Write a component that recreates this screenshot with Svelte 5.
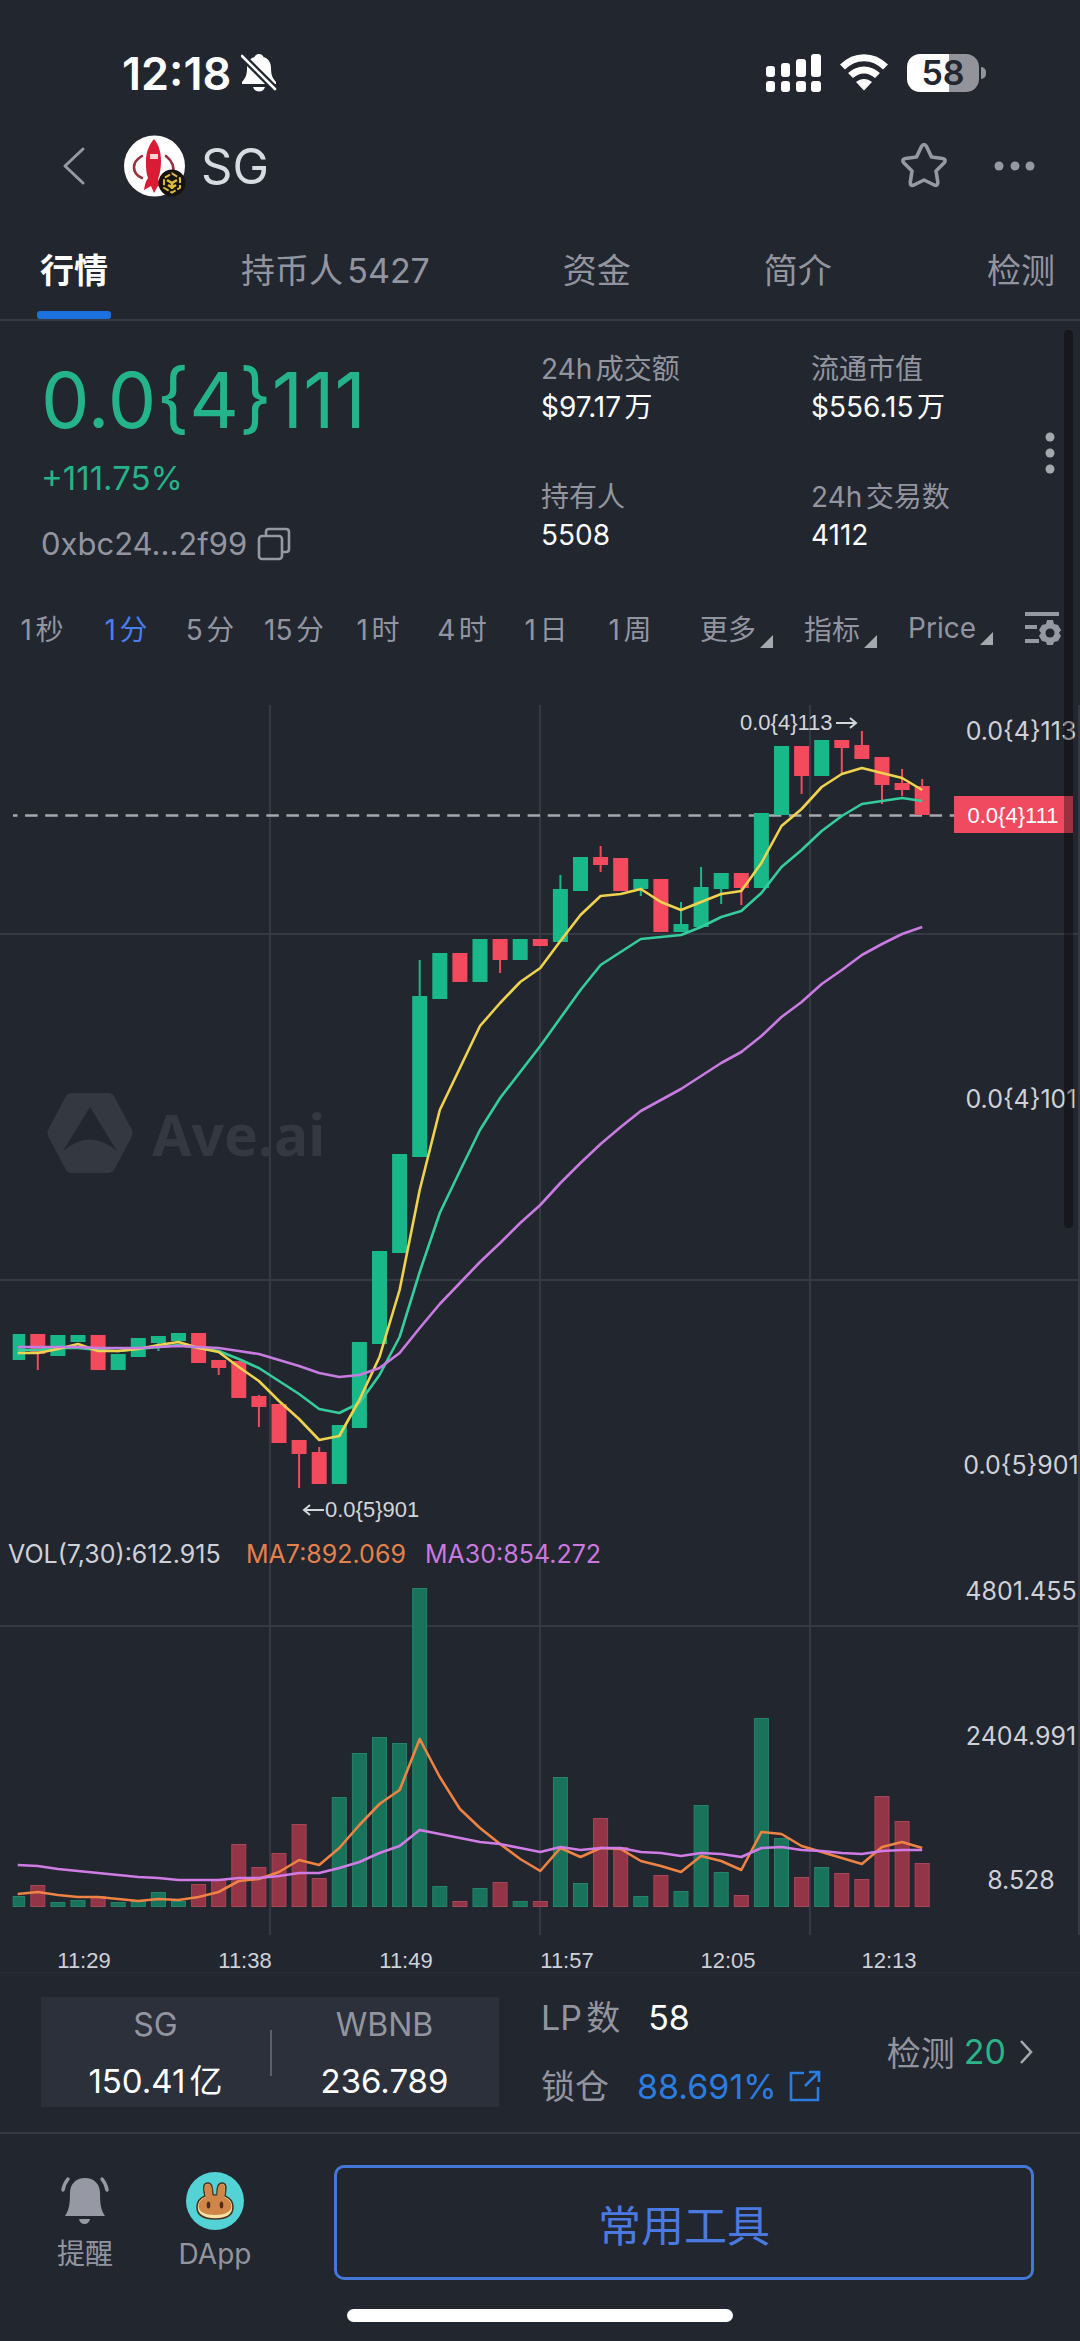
<script lang="ts">
  type Candle = { up: boolean; top: number; bottom: number; high?: number; low?: number };

  const tabs = ['行情', '持币人5427', '资金', '简介', '检测'];
  const intervals = ['1秒', '1分', '5分', '15分', '1时', '4时', '1日', '1周'];
  const menus = ['更多', '指标', 'Price'];

  const stats = [
    { label: '24h成交额', value: '$97.17万' },
    { label: '流通市值', value: '$556.15万' },
    { label: '持有人', value: '5508' },
    { label: '24h交易数', value: '4112' },
  ];

  let activeTab = $state('行情');
  let activeInterval = $state('1分');

  const up = (top: number, bottom: number, high?: number, low?: number): Candle => ({ up: true, top, bottom, high, low });
  const down = (top: number, bottom: number, high?: number, low?: number): Candle => ({ up: false, top, bottom, high, low });

  // One entry per minute, in chart units
  const candles: Candle[] = [
    up(674, 700), down(674, 694, 674, 710), up(675, 696), up(675, 682), down(675, 710),
    up(694, 710), up(678, 697), up(676, 683, 676, 691), up(673, 681), down(673, 703),
    down(700, 708, 700, 715), down(701, 738), down(736, 747, 735, 767), down(744, 783), down(780, 794, 780, 828),
    down(792, 824, 787), up(765, 824), up(682, 768), up(591, 684), up(494, 593),
    up(336, 497, 300), up(293, 339), down(293, 322), up(279, 322), down(279, 300, 279, 313),
    up(279, 300), down(279, 286), up(229, 282, 215), up(197, 231), down(197, 205, 186, 212),
    down(198, 231), up(219, 229, 219, 236), down(219, 272), up(264, 272, 242), up(227, 267, 207),
    up(213, 229, 213, 244), down(213, 228, 213, 245), up(153, 228), up(86, 155), down(86, 116, 86, 134),
    up(80, 116), down(80, 88, 80, 113), down(85, 99, 71), down(97, 125, 97, 144), down(123, 130, 109, 136),
    down(126, 155, 119),
  ];

  const volumes = [
    10, 21, 4, 6, 10, 4, 5, 14, 5, 22, 27, 62, 39, 53, 82, 28, 109, 153, 169, 163, 318, 20, 5, 18, 24, 5, 5, 129, 23,
    88, 59, 10, 31, 15, 101, 34, 11, 188, 68, 29, 39, 33, 27, 110, 85, 43,
  ];

  const lines = [
    {
      color: '#35cd9b',
      points: [
        690, 690, 688, 688, 690, 691, 689, 687, 685, 688, 691, 699, 708, 721, 734, 749, 753, 743, 715, 677, 612, 553,
        511, 470, 438, 412, 386, 358, 330, 305, 292, 279, 277, 275, 267, 257, 251, 233, 207, 190, 171, 156, 144, 141,
        138, 141,
      ],
    },
    {
      color: '#efd34f',
      points: [
        693, 693, 689, 684, 691, 691, 689, 685, 682, 688, 692, 707, 721, 741, 759, 780, 776, 740, 697, 630, 530, 450,
        408, 366, 343, 322, 308, 281, 255, 236, 234, 229, 242, 250, 242, 234, 231, 203, 166, 149, 127, 114, 108, 113,
        118, 130,
      ],
    },
    {
      color: '#c87be0',
      points: [
        687, 687, 687, 687, 688, 688, 688, 687, 686, 687, 688, 691, 694, 700, 706, 713, 717, 715, 708, 693, 668, 644,
        623, 602, 583, 563, 545, 523, 503, 484, 467, 451, 440, 429, 416, 403, 392, 376, 357, 342, 324, 310, 295, 284,
        274, 267,
      ],
    },
    {
      color: '#ee8344',
      points: [
        1234, 1232, 1235, 1237, 1237, 1239, 1241, 1239, 1240, 1237, 1232, 1221, 1219, 1212, 1200, 1205, 1188, 1165,
        1144, 1130, 1079, 1117, 1149, 1168, 1184, 1199, 1211, 1188, 1197, 1188, 1189, 1201, 1206, 1212, 1196, 1201,
        1210, 1172, 1174, 1186, 1192, 1198, 1204, 1187, 1182, 1188,
      ],
    },
    {
      color: '#d07ce6',
      points: [
        1205, 1206, 1209, 1211, 1213, 1215, 1217, 1218, 1220, 1220, 1220, 1218, 1218, 1216, 1213, 1213, 1208, 1202,
        1193, 1186, 1170, 1174, 1178, 1182, 1184, 1188, 1192, 1187, 1190, 1188, 1188, 1192, 1193, 1196, 1193, 1194,
        1197, 1188, 1187, 1190, 1191, 1193, 1194, 1191, 1190, 1190,
      ],
    },
  ];

  const axisLabels = [
    { text: '0.0{4}113', y: 80 },
    { text: '0.0{4}101', y: 448 },
    { text: '0.0{5}901', y: 814 },
    { text: '4801.455', y: 940 },
    { text: '2404.991', y: 1085 },
    { text: '8.528', y: 1229 },
  ];

  const times = ['11:29', '11:38', '11:49', '11:57', '12:05', '12:13'];

  const BASE = 1246;
  const cx = (i: number) => 17.7 + i * 20.1;
  const path = (points: number[]) => points.map((y, i) => `${cx(i).toFixed(1)},${y}`).join(' ');
</script>

<div class="app">
  <div class="status">
    <span class="clock">12:18</span>
    <svg class="mute" width="36" height="40" viewBox="0 0 36 40" aria-hidden="true">
      <path fill="#fff" d="M18 1c-2.500 0-4 1.500-4.500 3C8 6 6 10 6 15c0 7-1.500 10-5 14v2h34v-2c-3.500-4-5-7-5-14 0-5-2-9-7.500-11C22 2.500 20.500 1 18 1zM12 34h12c-1 3-3 4.500-6 4.500S13 37 12 34z" />
      <path stroke="#22262f" stroke-width="7" d="M0 2l36 36" />
      <path stroke="#fff" stroke-width="2.600" stroke-linecap="round" d="M1 3l33 33" />
    </svg>
    <svg class="signal" width="56" height="40" viewBox="0 0 56 40" fill="#fff" aria-hidden="true">
      <rect x="0" y="13" width="9" height="11" rx="3" /><rect x="15" y="10" width="9" height="14" rx="3" />
      <rect x="30" y="6" width="10" height="18" rx="3" /><rect x="45" y="1" width="10" height="23" rx="3" />
      <rect x="0" y="28" width="9" height="11" rx="3" /><rect x="15" y="28" width="9" height="11" rx="3" />
      <rect x="30" y="28" width="10" height="11" rx="3" /><rect x="45" y="28" width="10" height="11" rx="3" />
    </svg>
    <svg width="50" height="40" viewBox="0 0 50 40" aria-hidden="true">
      <g fill="none" stroke="#fff" stroke-width="7">
        <path d="M3.500 14C16 1.500 34 1.500 46.500 14" />
        <path d="M11.500 22.500C19.500 15 30.500 15 38.500 22.500" />
      </g>
      <path fill="#fff" d="M17 29c5-4 11-4 16 0L25 37.500z" />
    </svg>
    <div class="battery"><span>58</span></div>
  </div>

  <header class="nav">
    <button class="plain" aria-label="Back">
      <svg width="24" height="40" viewBox="0 0 24 40"><path fill="none" stroke="#9699a3" stroke-width="3" stroke-linecap="round" stroke-linejoin="round" d="M21 3L3 20l18 17" /></svg>
    </button>
    <svg class="avatar" width="62" height="62" viewBox="0 0 62 62" aria-hidden="true">
      <circle cx="30.500" cy="31" r="30.500" fill="#fff" />
      <g fill="none" stroke="#96303c" stroke-width="2.600" stroke-linecap="round">
        <path d="M18 21c-5 3-8 7-8 11 0 5 3 9 8 11" />
        <path d="M42 21c5 4 9 9 7 18" />
      </g>
      <path fill="#d91b34" d="M30 4c5 6 7 13 7 22 0 7-1 13-3 18l4 8-4-1-4 7-3-7-7 4c1-6 2-9 4-12-2-5-2-10-2-17 0-9 3-16 8-22z" />
      <rect x="26" y="19" width="8" height="5" fill="#ffd3d6" />
      <circle cx="48" cy="48" r="13.500" fill="#14130f" />
      <g fill="none" stroke="#e0b93f" stroke-width="2">
        <path d="M48 38.500l8 4.700v9.600l-8 4.700-8-4.700v-9.600z" stroke-dasharray="6 2" />
        <path d="M43 45l5 3 5-3M48 48v6M44 50l4 2.500 4-2.500" stroke-width="2.600" />
      </g>
    </svg>
    <h1>SG</h1>
    <button class="plain star" aria-label="Favourite">
      <svg width="48" height="48" viewBox="0 0 48 48"><path fill="none" stroke="#9699a3" stroke-width="3.600" stroke-linejoin="round" d="M21.500 4.500q2.500-4 5 0l5 10.500 11 1.500q4.500 1 1.500 4.500l-8 8 1.800 11q.4 4.500-3.500 3L24 38l-10 5q-4 1.500-3.700-3L12 29l-8-8q-3-3.500 1.500-4.500L16.500 15z" /></svg>
    </button>
    <button class="plain" aria-label="More">
      <svg width="42" height="12" viewBox="0 0 42 12" fill="#9699a3"><circle cx="5" cy="6" r="4.500" /><circle cx="21" cy="6" r="4.500" /><circle cx="36" cy="6" r="4.500" /></svg>
    </button>
  </header>

  <nav class="tabs">
    {#each tabs as tab}
      <button class:active={activeTab === tab} onclick={() => (activeTab = tab)}>{tab}</button>
    {/each}
  </nav>

  <section class="summary">
    <div class="quote">
      <div class="price">0.0{'{4}'}111</div>
      <div class="change">+111.75%</div>
      <div class="address">
        <span>0xbc24...2f99</span>
        <button class="plain" aria-label="Copy address">
          <svg width="34" height="34" viewBox="0 0 34 34" fill="none" stroke="#9699a3" stroke-width="2.600"><rect x="2" y="9" width="23" height="23" rx="3" /><path d="M9 9V5q0-3 3-3h17q3 0 3 3v17q0 3-3 3h-4" /></svg>
        </button>
      </div>
    </div>
    <dl class="stats">
      {#each stats as stat}
        <div>
          <dt>{stat.label}</dt>
          <dd>{stat.value}</dd>
        </div>
      {/each}
    </dl>
    <button class="plain more" aria-label="More data">
      <svg width="12" height="42" viewBox="0 0 12 42" fill="#a5a8ae"><circle cx="6" cy="5" r="4.500" /><circle cx="6" cy="21" r="4.500" /><circle cx="6" cy="37" r="4.500" /></svg>
    </button>
  </section>

  <div class="intervals">
    {#each intervals as item}
      <button class="interval" class:active={activeInterval === item} onclick={() => (activeInterval = item)}>{item}</button>
    {/each}
    <div class="menus">
      {#each menus as item}
        <button class="menu">{item}<svg width="13" height="13" viewBox="0 0 13 13"><path fill="#a5a8ae" d="M13 0v13H0z" /></svg></button>
      {/each}
      <button class="plain" aria-label="Chart settings">
        <svg width="38" height="34" viewBox="0 0 38 34">
          <path stroke="#9699a3" stroke-width="4" d="M1 3h34M1 16h12M1 30h14" />
          <path fill="#9699a3" d="M23 9h6l1 4 4 1 3 5-2 3 2 3-3 5-4 1-1 3h-6l-1-3-4-1-3-5 2-3-2-3 3-5 4-1z" />
          <circle cx="26" cy="22" r="4.500" fill="#22262f" />
        </svg>
      </button>
    </div>
  </div>

  <svg class="chart" viewBox="0 0 1080 1312" role="img" aria-label="SG price and volume">
    <g stroke="#343943" stroke-width="2">
      {#each [270, 540, 810, 1079] as x}
        <path d="M{x} 45V1275" />
      {/each}
      {#each [274, 620, 966] as y}
        <path d="M0 {y}H1080" />
      {/each}
    </g>

    <g fill="#343841">
      <path fill-rule="evenodd" d="M71 433h38q3 0 5 3l17 32q3 5 0 10l-17 32q-2 3-5 3H71q-3 0-5-3L49 478q-3-5 0-10l17-32q2-3 5-3zM90 447L63 491q27-23 54 0z" />
      <text class="brand" x="152" y="496">Ave.ai</text>
    </g>

    <path stroke="#a6a9ae" stroke-width="2.500" stroke-dasharray="12.500 7.600" stroke-dashoffset="8" d="M13 155.500H954" />

    {#each candles as c, i}
      {@const left = Math.max(cx(i) - 7.5, 12.7)}
      <g fill={c.up ? '#19b888' : '#f34a5d'}>
        <rect x={cx(i) - 1} y={c.high ?? c.top} width="2" height={(c.low ?? c.bottom) - (c.high ?? c.top)} />
        <rect x={left} y={c.top} width={cx(i) + 7.5 - left} height={c.bottom - c.top} />
      </g>
      <rect
        x={left + 0.5}
        y={BASE - volumes[i] + 0.5}
        width={cx(i) + 7 - left - 0.5}
        height={volumes[i]}
        fill={c.up ? '#19735b' : '#913547'}
        stroke={c.up ? '#25836b' : '#a94459'}
      />
    {/each}

    {#each lines as line}
      <polyline points={path(line.points)} fill="none" stroke={line.color} stroke-width="2.600" stroke-linejoin="round" />
    {/each}

    <g class="note">
      <text x="740" y="70">0.0{'{4}'}113</text>
      <path d="M836 63h20m-6-5l6 5-6 5" />
      <text x="325" y="857">0.0{'{5}'}901</text>
      <path d="M324 850h-20m6-5l-6 5 6 5" />
    </g>

    <rect x="954" y="136" width="119" height="37" fill="#f04a60" />
    <text class="tag" x="1013" y="163">0.0{'{4}'}111</text>

    <g class="axis">
      {#each axisLabels as label}
        <text x="1021" y={label.y}>{label.text}</text>
      {/each}
    </g>

    <g class="legend">
      <text x="8" y="903" fill="#cfd1d8">VOL(7,30):612.915</text>
      <text x="246" y="903" fill="#e5814b">MA7:892.069</text>
      <text x="425" y="903" fill="#c979df">MA30:854.272</text>
    </g>

    <g class="times">
      {#each times as time, i}
        <text x={84 + i * 161} y="1308">{time}</text>
      {/each}
    </g>
  </svg>

  <section class="pool">
    <div class="reserves">
      <div><span>SG</span><strong>150.41亿</strong></div>
      <div><span>WBNB</span><strong>236.789</strong></div>
    </div>
    <div class="liquidity">
      <div>LP数 <strong>58</strong></div>
      <div>
        锁仓
        <a href="#lock">88.691%
          <svg width="32" height="32" viewBox="0 0 32 32" fill="none" stroke="#2b7de0" stroke-width="2.600"><path d="M15 3H2v27h27V17M20 2h10v10M30 2L16 16" /></svg>
        </a>
      </div>
    </div>
    <a class="audit" href="#audit">检测 <b>20</b>
      <svg width="14" height="26" viewBox="0 0 14 26" fill="none" stroke="#a5a8ae" stroke-width="2.600"><path d="M2 2l10 11L2 24" /></svg>
    </a>
  </section>

  <footer>
    <div class="actions">
      <button class="action">
        <svg width="58" height="58" viewBox="0 0 58 58" fill="#9699a3">
          <path d="M29 6c-9 0-15 6-15 15 0 11-1 17-5 23h40c-4-6-5-12-5-23 0-9-6-15-15-15zM23 47h11q-1 5-5.500 5T23 47z" />
          <path fill="none" stroke="#9699a3" stroke-width="3.500" stroke-linecap="round" d="M12 7q-4 5-5 11M46 7q4 5 5 11" />
        </svg>
        提醒
      </button>
      <button class="action">
        <svg width="58" height="58" viewBox="0 0 58 58">
          <circle cx="29" cy="29" r="29" fill="#53d3d6" />
          <path fill="#f6e2a4" stroke="#4a3521" stroke-width="1.600" d="M19 24c-2-8-2-13 3-13 4 0 4 4 5 12h4c0-8 1-12 5-12 5 0 4 5 3 13 5 2 8 6 8 11 0 8-7 12-18 12S11 43 11 35c0-5 3-9 8-11z" />
          <path fill="#cf8648" d="M20 25c-2-8-2-13 2-13s4 5 4.500 12h5C31.500 17 32 12 36 12s3 5 2 13c4.500 2 7.500 5 7.500 9 0 6-7 9-16.500 9s-16.500-3-16.500-9c0-4 3-7 7.500-9z" />
          <ellipse cx="22.500" cy="33" rx="1.800" ry="3.500" fill="#53291a" /><ellipse cx="35.500" cy="33" rx="1.800" ry="3.500" fill="#53291a" />
        </svg>
        DApp
      </button>
      <button class="tools">常用工具</button>
    </div>
    <div class="home"></div>
  </footer>

  <div class="scrollbar"></div>
</div>

<style>
  :global(body) {
    background: #22262f;
  }

  .app {
    position: relative;
    overflow: hidden;
    background: #22262f;
    color: #9295a0;
    font-family: Inter, 'Noto Sans CJK SC', sans-serif;
    font-size: 32px;
    text-autospace: normal;
  }

  .app :global(*) {
    box-sizing: border-box;
  }

  svg {
    display: block;
    flex-shrink: 0;
  }

  button {
    padding: 0;
    border: 0;
    background: none;
    color: inherit;
    font: inherit;
    cursor: pointer;
    white-space: nowrap;
  }

  a {
    text-decoration: none;
  }

  .status {
    display: flex;
    align-items: center;
    height: 114px;
    padding: 32px 101px 0 122px;
  }

  .clock {
    color: #fff;
    font-size: 45px;
    font-weight: 600;
  }

  .mute {
    margin-left: 10px;
  }

  .signal {
    margin-left: auto;
    margin-right: 17px;
  }

  .battery {
    position: relative;
    display: grid;
    place-items: center;
    width: 72px;
    height: 38px;
    margin-left: 18px;
    border-radius: 13px;
    background: linear-gradient(90deg, #fff 58%, #92939b 58%);
    color: #22262f;
    font-size: 34px;
    font-weight: 600;
    line-height: 38px;
  }

  .battery::after {
    content: '';
    position: absolute;
    right: -7px;
    width: 5px;
    height: 12px;
    border-radius: 0 5px 5px 0;
    background: #92939b;
  }

  .nav {
    display: flex;
    align-items: center;
    height: 104px;
    padding: 0 44px 0 62px;
  }

  .avatar {
    margin-left: 38px;
  }

  h1 {
    margin: 0 0 0 15px;
    color: #d9dbe3;
    font-size: 49px;
    font-weight: 400;
  }

  .star {
    margin-left: auto;
    margin-right: 46px;
  }

  .tabs {
    display: flex;
    gap: 133px;
    height: 103px;
    padding: 0 25px 0 40px;
    border-bottom: 2px solid #343943;
    font-size: 34px;
  }

  .tabs button {
    position: relative;
  }

  .tabs button:last-child {
    margin-left: auto;
  }

  .tabs .active {
    color: #fff;
    font-weight: 700;
  }

  .tabs .active::after {
    content: '';
    position: absolute;
    left: -3px;
    right: -3px;
    bottom: 0;
    height: 8px;
    border-radius: 3px;
    background: #1b72df;
  }

  .summary {
    display: grid;
    grid-template-columns: 1fr 503px 16px;
    height: 275px;
    padding: 0 20px 0 41px;
  }

  .price {
    margin-top: 39px;
    color: #25b389;
    font-size: 77px;
    line-height: 80px;
  }

  .change {
    margin-top: 18px;
    color: #25b389;
    font-size: 33px;
    line-height: 40px;
  }

  .address {
    display: flex;
    align-items: center;
    gap: 10px;
    margin-top: 26px;
    font-size: 31px;
    line-height: 40px;
  }

  .stats {
    display: grid;
    grid-template-columns: 270px 1fr;
    align-content: start;
    row-gap: 52px;
    margin: 28px 0 0;
    font-size: 28px;
  }

  dt {
    line-height: 40px;
  }

  dd {
    margin: 0;
    color: #fff;
    line-height: 36px;
  }

  .more {
    align-self: center;
    padding-bottom: 12px;
  }

  .intervals {
    display: flex;
    align-items: center;
    height: 64px;
    font-size: 28px;
  }

  .interval {
    width: 84px;
    flex-shrink: 0;
  }

  .interval.active {
    color: #4a7df0;
  }

  .menus {
    display: flex;
    flex: 1;
    align-items: center;
    justify-content: space-between;
    padding: 0 18px 0 28px;
  }

  .menu {
    display: flex;
    align-items: flex-end;
    gap: 4px;
  }

  .chart {
    width: 100%;
    height: auto;
  }

  .brand {
    font-family: 'Noto Sans', sans-serif;
    font-size: 57px;
    font-weight: 700;
  }

  .note,
  .tag,
  .times {
    font-family: 'Liberation Sans', sans-serif;
  }

  .note text {
    fill: #d3d5db;
    font-size: 22px;
  }

  .note path {
    fill: none;
    stroke: #d3d5db;
    stroke-width: 2;
  }

  .tag {
    fill: #fff;
    font-size: 22px;
    text-anchor: middle;
  }

  .axis {
    fill: #cfd1d8;
    font-size: 25px;
    text-anchor: middle;
  }

  .legend {
    font-size: 25px;
  }

  .times {
    fill: #cfd1d8;
    font-size: 22px;
    text-anchor: middle;
  }

  .pool {
    display: flex;
    align-items: center;
    height: 162px;
    padding: 0 47px 2px 41px;
    border-top: 1px solid #2c313a;
    border-bottom: 2px solid #343943;
  }

  .reserves {
    display: grid;
    grid-template-columns: 1fr 1fr;
    align-items: center;
    width: 458px;
    height: 110px;
    background: #2b303b;
  }

  .reserves div {
    display: flex;
    flex-direction: column;
    align-items: center;
    line-height: 56px;
  }

  .reserves div + div {
    background: linear-gradient(#5a5f69, #5a5f69) left center / 2px 46px no-repeat;
  }

  strong {
    color: #fff;
    font-weight: 400;
  }

  .reserves strong {
    font-size: 33px;
  }

  .liquidity {
    margin-left: 42px;
    font-size: 34px;
    line-height: 69px;
  }

  .liquidity div {
    display: flex;
    gap: 28px;
  }

  .liquidity a {
    display: flex;
    align-items: center;
    gap: 12px;
    color: #2b7de0;
  }

  .audit {
    display: flex;
    align-items: center;
    gap: 9px;
    margin-left: auto;
    color: #9295a0;
    font-size: 34px;
  }

  .audit b {
    margin-right: 4px;
    color: #2bb38a;
    font-weight: 400;
  }

  .actions {
    display: flex;
    align-items: center;
    padding: 31px 46px 0 0;
  }

  .action {
    display: flex;
    flex-direction: column;
    align-items: center;
    gap: 4px;
    width: 130px;
    margin-left: 20px;
    font-size: 28px;
    line-height: 40px;
  }

  .action + .action {
    margin-left: 0;
  }

  .tools {
    flex: 1;
    height: 115px;
    margin-left: 54px;
    border: 3px solid #4477d8;
    border-radius: 10px;
    color: #4a7ae0;
    font-size: 43px;
  }

  .home {
    width: 386px;
    height: 13px;
    margin: 29px auto 20px;
    border-radius: 7px;
    background: #fff;
  }

  .scrollbar {
    position: absolute;
    top: 330px;
    right: 7px;
    width: 9px;
    height: 898px;
    border-radius: 4px;
    background: rgba(0, 0, 0, 0.35);
  }
</style>
